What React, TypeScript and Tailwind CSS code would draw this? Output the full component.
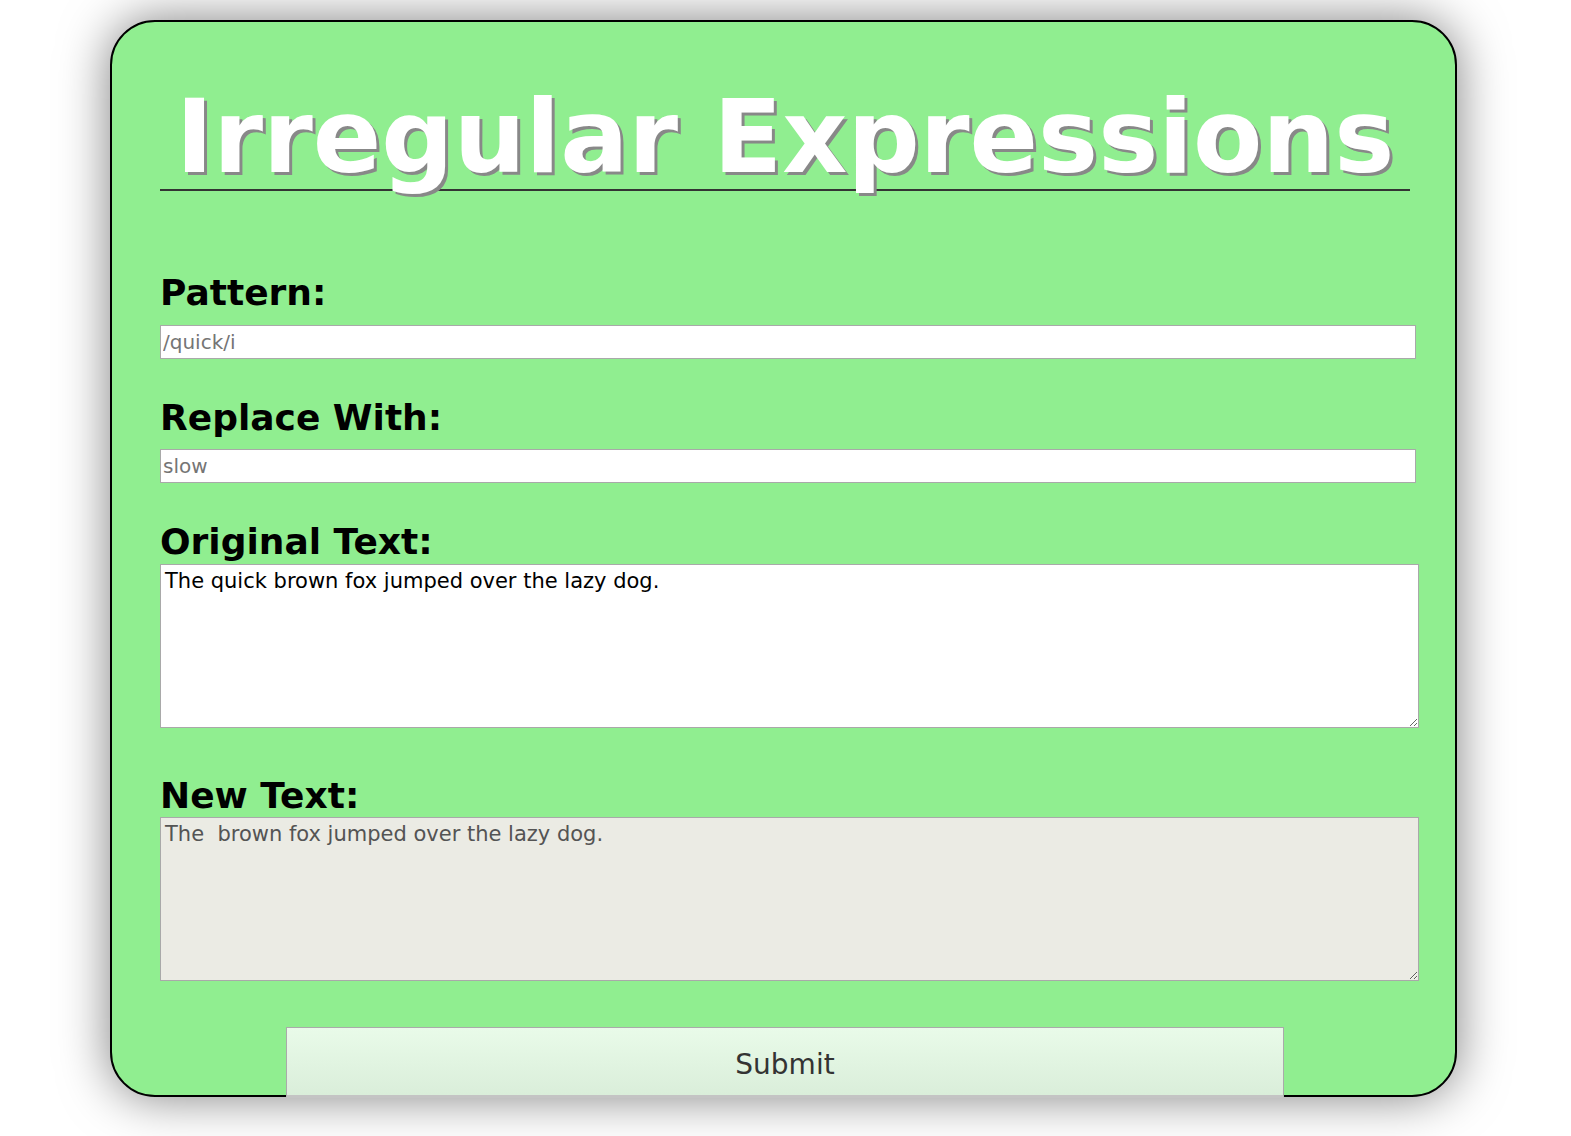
import React, { useState } from 'react';

const ORIGINAL = 'The quick brown fox jumped over the lazy dog.';

const App: React.FC = () => {
  const [pattern, setPattern] = useState('');
  const [replacement, setReplacement] = useState('');
  const [original, setOriginal] = useState(ORIGINAL);
  const [result, setResult] = useState('The  brown fox jumped over the lazy dog.');

  const handleSubmit = (e: React.FormEvent) => {
    e.preventDefault();
    const src = pattern || '/quick/i';
    const m = src.match(/^\/(.*)\/([a-z]*)$/);
    try {
      const re = m ? new RegExp(m[1], m[2]) : new RegExp(src);
      setResult(original.replace(re, replacement));
    } catch {
      setResult(original);
    }
  };

  const labelCls = 'block text-[36px] font-bold leading-[40px] text-black';
  const inputCls =
    'block h-[34px] w-[1256px] border border-[#a9a9a9] bg-white px-[2px] text-[20px] leading-[normal] text-black outline-none placeholder:text-[#757575]';
  const areaCls =
    'block h-[164px] w-[1259px] border border-[#a9a9a9] p-[4px] text-[21px] leading-[normal] outline-none';

  return (
    <div className="min-h-[1136px] bg-white pt-[20px] font-['DejaVu_Sans',Verdana,sans-serif]">
      <div className="ml-[110px] h-[1077px] w-[1347px] rounded-[45px] border-2 border-black bg-[#90ee90] pl-[48px] pr-[45px] pt-[64px] shadow-[0_0_50px_rgba(0,0,0,0.5)]">
        <h1 className="border-b-2 border-[#333] text-center text-[101px] font-bold leading-[103px] text-white [text-shadow:3px_3px_0_#888]">
          Irregular Expressions
        </h1>

        <form onSubmit={handleSubmit}>
          <label className={`${labelCls} mt-[82px]`}>Pattern:</label>
          <input
            type="text"
            placeholder="/quick/i"
            value={pattern}
            onChange={(e) => setPattern(e.target.value)}
            className={`${inputCls} mt-[12px]`}
          />

          <label className={`${labelCls} mt-[39px]`}>Replace With:</label>
          <input
            type="text"
            placeholder="slow"
            value={replacement}
            onChange={(e) => setReplacement(e.target.value)}
            className={`${inputCls} mt-[11px]`}
          />

          <label className={`${labelCls} mt-[39px]`}>Original Text:</label>
          <textarea
            value={original}
            onChange={(e) => setOriginal(e.target.value)}
            className={`${areaCls} mt-[2px] bg-white text-black`}
          />

          <label className={`${labelCls} mt-[48px]`}>New Text:</label>
          <textarea
            readOnly
            value={result}
            className={`${areaCls} mt-[1px] bg-[#ebebe4] text-[#545454]`}
          />

          <button
            type="submit"
            className="mx-auto mt-[46px] block h-[71px] w-[998px] border border-[#aaa] border-b-[3px] border-b-[#c4c4c4] bg-linear-to-b from-[#e9fbe9] to-[#daeeda] pt-[5px] text-[28px] leading-[normal] text-[#333]"
          >
            Submit
          </button>
        </form>
      </div>
    </div>
  );
};

export default App;
